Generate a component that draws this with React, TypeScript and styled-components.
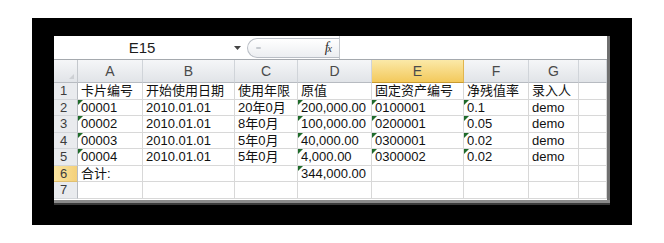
import React from 'react';
import styled, { createGlobalStyle } from 'styled-components';

const GlobalStyle = createGlobalStyle`
  html, body {
    margin: 0;
    padding: 0;
    background: #ffffff;
  }
  body {
    width: 664px;
    height: 243px;
    overflow: hidden;
    font-family: 'Liberation Sans', 'Noto Sans CJK SC', sans-serif;
  }
`;

const Frame = styled.div`
  margin: 18px 0 0 32px;
  width: 600px;
  height: 207px;
  box-sizing: border-box;
  background: #000;
  padding: 18px 22px 0 22px;
`;

const Sheet = styled.div`
  width: 553px;
  height: 164px;
  background: #fff;
  border-right: 3px solid #6f6f6f;
  box-shadow: 0 3px 0 #8a8a8a, 0 5px 0 #3a3a3a;
  overflow: hidden;
  display: flex;
  flex-direction: column;
`;

const FormulaBar = styled.div`
  display: flex;
  align-items: center;
  height: 23px;
  border-bottom: 1px solid #a5a9ae;
  box-shadow: 0 1px 0 #e2e4e7;
  flex-shrink: 0;
`;

const NameBox = styled.div`
  width: 172px;
  text-align: center;
  font-size: 15px;
  color: #1c1c1c;
  padding-left: 2px;
`;

const Caret = styled.div`
  width: 18px;
  display: flex;
  justify-content: center;
  svg {
    display: block;
  }
`;

const FxPill = styled.div`
  margin-left: 1px;
  width: 92px;
  height: 20px;
  box-sizing: border-box;
  border: 1px solid #b9bec5;
  border-right: none;
  border-radius: 11px 0 0 11px;
  background: linear-gradient(#ffffff, #eceef1);
  display: flex;
  align-items: center;
  justify-content: space-between;
  padding: 0 8px 0 8px;
`;

const Nub = styled.span`
  width: 5px;
  height: 2px;
  border-radius: 1px;
  background: #c6cacf;
`;

const Fx = styled.span`
  font-family: 'Liberation Serif', serif;
  font-style: italic;
  font-size: 14px;
  color: #2b2b2b;
  letter-spacing: -1px;
  small {
    font-size: 10px;
  }
`;

const Divider = styled.div`
  width: 1px;
  height: 23px;
  background: #c3c7cc;
`;

const Grid = styled.div`
  display: grid;
  grid-template-columns: 24px 65px 92px 63px 74px 92px 65px 50px 1fr;
  grid-template-rows: 23px repeat(7, 16.5px);
`;

const Corner = styled.div`
  background: linear-gradient(#f5f6f8, #e1e4e8);
  border-right: 1px solid #c4c8cd;
  border-bottom: 1px solid #b7bbc1;
  position: relative;
  &::after {
    content: '';
    position: absolute;
    right: 3px;
    bottom: 3px;
    border-left: 5px solid transparent;
    border-bottom: 5px solid #cdd0d4;
  }
`;

const ColHead = styled.div<{ $active?: boolean }>`
  background: ${({ $active }) =>
    $active
      ? 'linear-gradient(#fbe9a8, #f3c95c)'
      : 'linear-gradient(#f5f6f8, #e1e4e8)'};
  border-right: 1px solid ${({ $active }) => ($active ? '#e1b54e' : '#d0d4d9')};
  border-bottom: 1px solid ${({ $active }) => ($active ? '#c89a30' : '#b7bbc1')};
  font-size: 14px;
  color: #4a4a4a;
  text-align: center;
  line-height: 22px;
`;

const RowHead = styled.div<{ $active?: boolean }>`
  background: ${({ $active }) =>
    $active ? 'linear-gradient(90deg, #fae6a2, #f4d07a)' : '#e9ebee'};
  border-right: 1px solid #b7bbc1;
  border-bottom: 1px solid ${({ $active }) => ($active ? '#e1c070' : '#d3d6da')};
  font-size: 13px;
  color: #3c3c3c;
  padding-left: 6px;
  line-height: 16px;
`;

const Cell = styled.div<{ $flag?: boolean }>`
  position: relative;
  border-right: 1px solid #d8d8d8;
  border-bottom: 1px solid #d8d8d8;
  font-family: 'Liberation Sans', 'Noto Sans CJK SC', sans-serif;
  font-size: 13px;
  color: #111;
  padding-left: 3px;
  line-height: 15px;
  white-space: nowrap;
  &::before {
    content: '';
    display: ${({ $flag }) => ($flag ? 'block' : 'none')};
    position: absolute;
    left: 0;
    top: 0;
    border-top: 5px solid #1f6b2a;
    border-right: 5px solid transparent;
  }
`;

type Row = {
  cells: string[];
  flags: number[];
};

const columns = ['A', 'B', 'C', 'D', 'E', 'F', 'G', ''];

const rows: Row[] = [
  { cells: ['卡片编号', '开始使用日期', '使用年限', '原值', '固定资产编号', '净残值率', '录入人', ''], flags: [] },
  { cells: ['00001', '2010.01.01', '20年0月', '200,000.00', '0100001', '0.1', 'demo', ''], flags: [0, 3, 4, 5] },
  { cells: ['00002', '2010.01.01', '8年0月', '100,000.00', '0200001', '0.05', 'demo', ''], flags: [0, 3, 4, 5] },
  { cells: ['00003', '2010.01.01', '5年0月', '40,000.00', '0300001', '0.02', 'demo', ''], flags: [0, 3, 4, 5] },
  { cells: ['00004', '2010.01.01', '5年0月', '4,000.00', '0300002', '0.02', 'demo', ''], flags: [0, 3, 4, 5] },
  { cells: ['合计:', '', '', '344,000.00', '', '', '', ''], flags: [3] },
  { cells: ['', '', '', '', '', '', '', ''], flags: [] },
];

export default function App() {
  return (
    <>
      <GlobalStyle />
      <Frame>
        <Sheet>
          <FormulaBar>
            <NameBox>E15</NameBox>
            <Caret>
              <svg width="7" height="4" viewBox="0 0 7 4">
                <path d="M0 0 L7 0 L3.5 4 Z" fill="#444" />
              </svg>
            </Caret>
            <FxPill>
              <Nub />
              <Fx>
                f<small>x</small>
              </Fx>
            </FxPill>
            <Divider />
          </FormulaBar>
          <Grid>
            <Corner />
            {columns.map((c, i) => (
              <ColHead key={i} $active={c === 'E'}>
                {c}
              </ColHead>
            ))}
            {rows.map((row, r) => (
              <React.Fragment key={r}>
                <RowHead $active={r === 5}>{r + 1}</RowHead>
                {row.cells.map((v, c) => (
                  <Cell key={c} $flag={row.flags.includes(c)}>
                    {v}
                  </Cell>
                ))}
              </React.Fragment>
            ))}
          </Grid>
        </Sheet>
      </Frame>
    </>
  );
}
